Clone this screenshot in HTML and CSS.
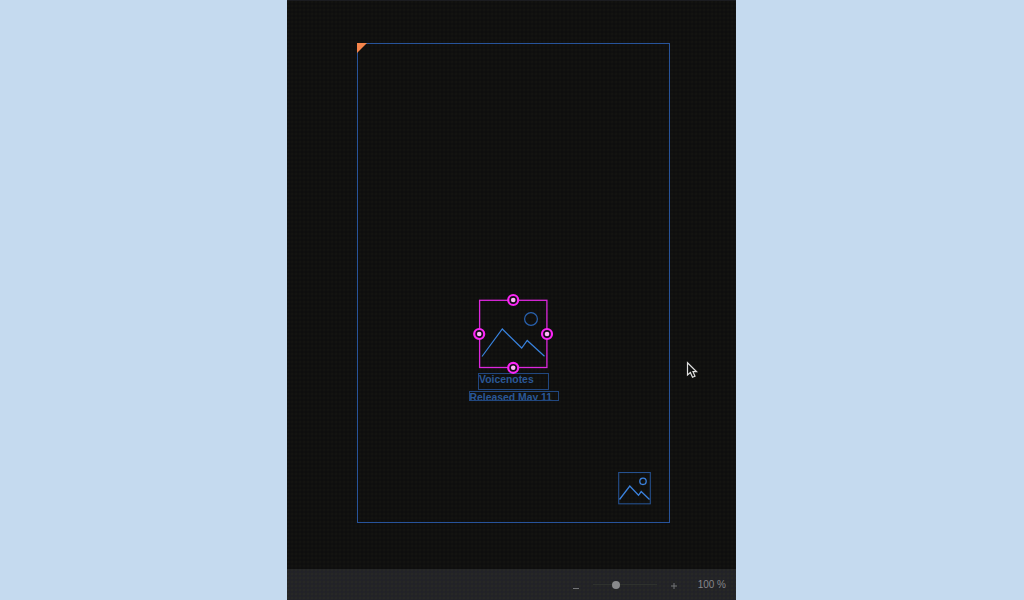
FILE: index.html
```html
<!DOCTYPE html>
<html lang="en">
<head>
<meta charset="utf-8">
<title>Canvas editor</title>
<link rel="stylesheet" href="styles.css">
</head>
<body>
<main class="editor">
  <section class="canvas">
    <div class="artboard">
      <svg class="corner" viewBox="0 0 9 9"><path d="M0 0H9L0 9Z"/></svg>
      <div class="layer text-title">Voicenotes</div>
      <div class="layer text-date">Released May 11</div>
      <svg class="layer thumb" viewBox="0 0 33 33">
        <rect x=".7" y=".5" width="31.600" height="31.300"/>
        <circle cx="25" cy="9.300" r="3.200"/>
        <path d="M1.500 27.500 11.800 14 20.500 23.300 23.200 19.500 31.500 27.500"/>
      </svg>
      <svg class="layer selected" viewBox="0 0 82 82">
        <g class="picture">
          <circle cx="59" cy="26" r="6.400"/>
          <path d="M10 63.500 30.300 36 49.700 55 55.200 47.500 72.500 63.300"/>
        </g>
        <rect class="outline" x="7.600" y="7.300" width="67.300" height="67.200"/>
        <g class="handle"><circle cx="41.200" cy="7" r="5"/><circle cx="75" cy="41" r="5"/><circle cx="41.200" cy="74.800" r="5"/><circle cx="7.200" cy="41" r="5"/></g>
        <g class="dot"><circle cx="41.200" cy="7" r="2.300"/><circle cx="75" cy="41" r="2.300"/><circle cx="41.200" cy="74.800" r="2.300"/><circle cx="7.200" cy="41" r="2.300"/></g>
      </svg>
    </div>
    <svg class="cursor" viewBox="0 0 12 18"><path d="M1.500 1.700V14L4.400 11.500 6.500 16.300 9 15.200 7 10.700H10.700Z"/></svg>
  </section>
  <footer class="zoombar">
    <svg class="minus" viewBox="0 0 8 12"><path d="M1 9.500H7"/></svg>
    <div class="slider"><span class="knob"></span></div>
    <svg class="plus" viewBox="0 0 8 12"><path d="M1 7H7M4 4V10"/></svg>
    <span class="percent">100 %</span>
  </footer>
</main>
</body>
</html>
```
FILE: styles.css
```css
* { box-sizing: border-box; }
body {
  margin: 0;
  height: 600px;
  overflow: hidden;
  display: flex;
  background: #c5daef;
  font-family: "Liberation Sans", Arial, sans-serif;
}
svg { display: block; fill: none; }
.editor {
  width: 449px;
  height: 600px;
  margin-left: 287px;
  display: flex;
  flex-direction: column;
}
.canvas {
  position: relative;
  flex: 1;
  border-top: 1px solid #1b1c20;
  background-color: #10100f;
  background-image:
    radial-gradient(circle at 1px 1px, #151512 0.5px, transparent 1px),
    radial-gradient(circle at 3px 3px, #0c0c0e 0.5px, transparent 1px);
  background-size: 4px 4px;
}
.artboard {
  position: absolute;
  left: 70px;
  top: 42px;
  width: 313px;
  height: 480px;
  border: 1px solid #27539a;
}
.corner {
  position: absolute;
  left: -1px;
  top: -1px;
  width: 10px;
  height: 10px;
  fill: #f6854b;
}
.layer { position: absolute; }
.text-title, .text-date {
  border: 1px solid #21477f;
  color: #2a5897;
  font-weight: bold;
  font-size: 10.4px;
  white-space: nowrap;
  overflow: hidden;
}
.text-title {
  left: 120px;
  top: 329px;
  width: 71px;
  height: 17px;
  line-height: 12px;
}
.text-date {
  left: 111px;
  top: 347px;
  width: 90px;
  height: 10px;
  line-height: 12px;
  text-indent: -0.5px;
}
.thumb {
  left: 260px;
  top: 428px;
  width: 33px;
  height: 33px;
  stroke: #3b82df;
  stroke-width: 1.3;
}
.thumb rect { stroke: #25508f; stroke-width: 1.1; }
.selected {
  left: 114px;
  top: 249px;
  width: 82px;
  height: 82px;
}
.picture { stroke: #3882dd; stroke-width: 1.2; }
.picture circle { stroke: #2962b0; }
.outline { stroke: #dc27dd; stroke-width: 1.3; }
.handle { fill: #160d18; stroke: #fb26f6; stroke-width: 2.2; }
.dot { fill: #ffb4f8; }
.cursor {
  position: absolute;
  left: 399px;
  top: 360px;
  width: 12px;
  height: 18px;
  fill: #111211;
  stroke: #e0e0e0;
  stroke-width: 1.2;
}
.zoombar {
  height: 31px;
  padding: 0 10px 0 285px;
  display: flex;
  align-items: center;
  background-color: #232426;
  background-image:
    radial-gradient(circle at 1px 1px, #292a27 0.5px, transparent 1px),
    radial-gradient(circle at 3px 3px, #20202a 0.5px, transparent 1px);
  background-size: 4px 4px;
  color: #85868a;
}
.minus, .plus { width: 8px; height: 12px; stroke: #737477; stroke-width: 1; }
.slider {
  width: 64px;
  height: 8px;
  margin: 0 13px;
  display: flex;
  align-items: center;
  background: linear-gradient(#2e312e, #2e312e) center / 100% 1px no-repeat;
}
.knob {
  width: 8px;
  height: 8px;
  margin-left: 18.5px;
  border-radius: 50%;
  background: #88898b;
}
.percent {
  margin-left: auto;
  font-size: 10px;
  line-height: 12px;
}
```
